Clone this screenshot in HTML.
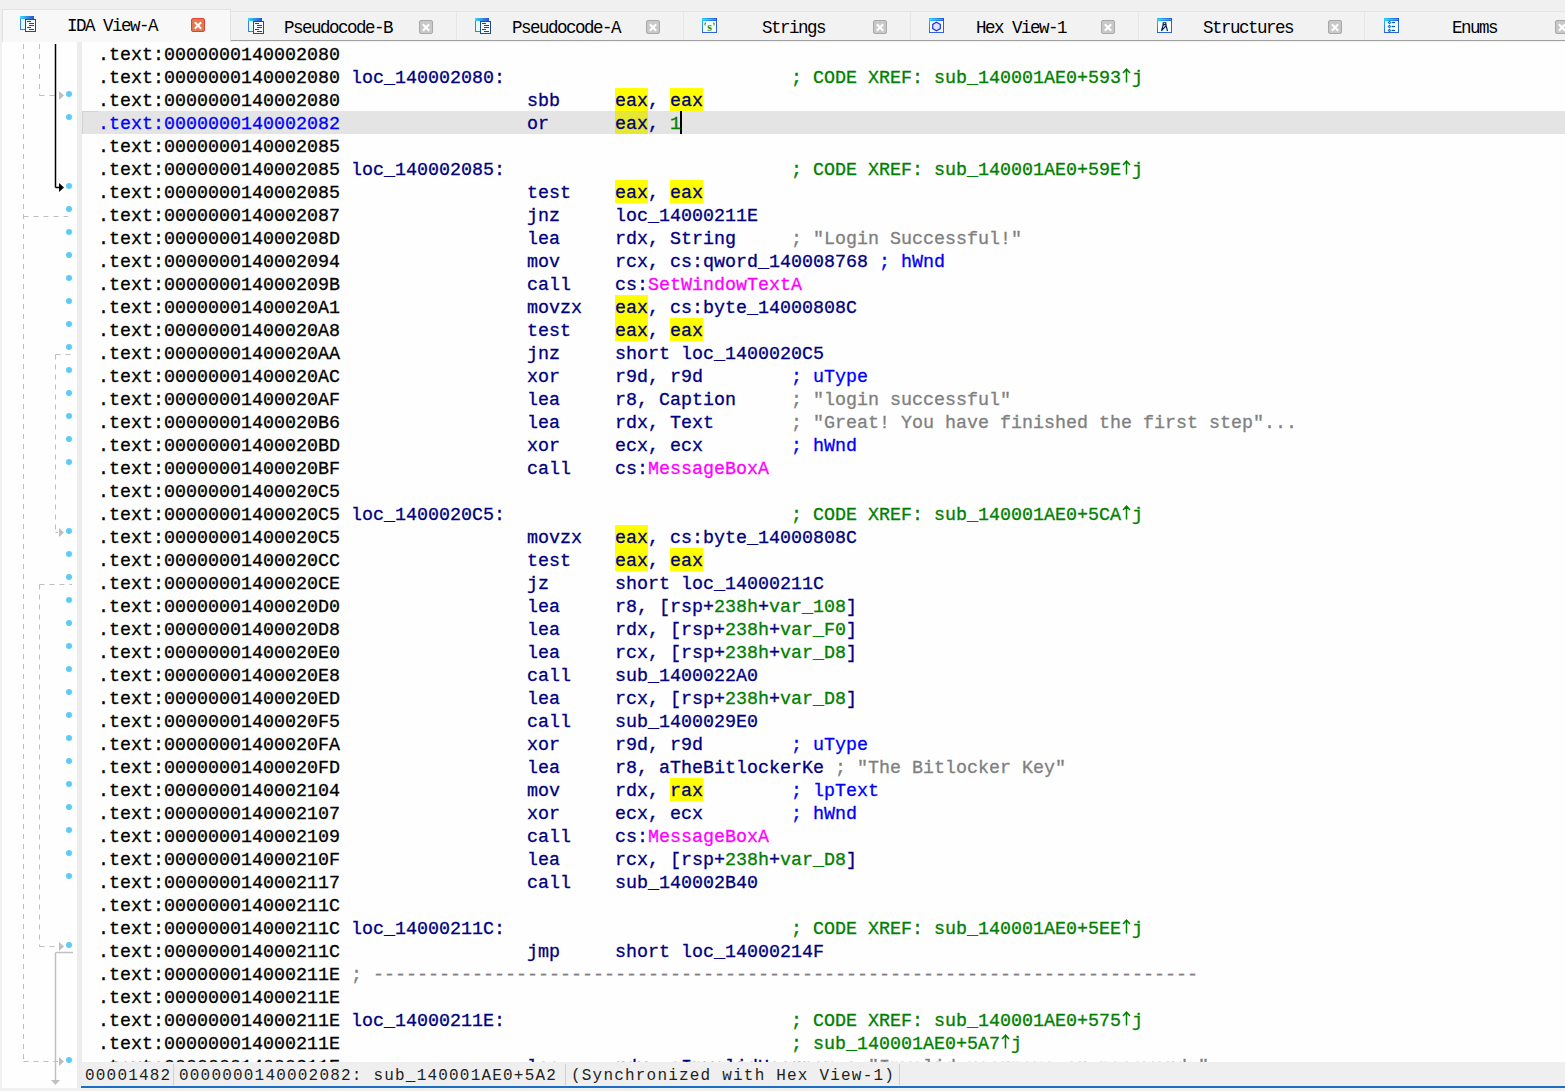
<!DOCTYPE html>
<html><head><meta charset="utf-8">
<style>
html,body{margin:0;padding:0;}
body{width:1565px;height:1091px;overflow:hidden;background:#f0f0f0;position:relative;font-family:"Liberation Mono",monospace;}
.abs{position:absolute;}
#tabbar{left:0;top:0;width:1565px;height:42px;background:#f0f0f0;}
.tab{position:absolute;top:11px;height:29px;width:227px;background:#f2f2f2;border-right:1px solid #e6e6e6;border-top:1px solid #e6e6e6;box-sizing:border-box;}
.tab.active{top:9px;height:33px;background:#f8f8f8;border:1px solid #e2e2e2;border-bottom:none;}
.tabline{position:absolute;left:231px;top:40px;width:1335px;height:1px;background:#a0a0a0;}
.ttxt{position:absolute;top:5px;font-family:"Liberation Mono",monospace;font-size:17.5px;letter-spacing:-1.5px;line-height:20px;color:#000;white-space:pre;}
.cls{position:absolute;width:12px;height:12px;border:1px solid #a8a8a8;border-radius:2px;background:#c8c8c8;}
.cls:before,.cls:after{content:"";position:absolute;left:5px;top:1.5px;width:2px;height:9px;background:#fff;transform:rotate(45deg);}
.cls:after{transform:rotate(-45deg);}
.cls.act{background:#e2784e;border-color:#d8463a;}
.ico{position:absolute;}
#gutter{left:2px;top:42px;width:75px;height:1046px;background:#fefefe;}
#gstrip{left:77px;top:42px;width:5px;height:1046px;background:#ececec;}
#code{left:82px;top:42px;width:1483px;height:1020px;background:#fefefe;overflow:hidden;}
.row{position:absolute;left:0;width:1483px;height:23px;}
.tx{position:absolute;left:16px;top:2px;line-height:23px;white-space:pre;font-size:18.33px;color:#000;-webkit-text-stroke:0.3px currentColor;}
.up{display:inline-block;width:11px;height:1px;position:relative;}
.up svg{position:absolute;left:0;bottom:0;}
.hl{position:absolute;top:0;height:23px;background:#ffff00;}
.hl.hs{background:#e6e634;}
.row.sel{background:#e4e4e4;box-shadow:inset 1px 0 #d2d2d2;}
.row.sel:before{content:"";position:absolute;left:0;top:0;width:16px;height:1px;background:#d2d2d2;}
.k{color:#000;}
.selk{color:#0000ff;}
.n{color:#000080;}
.g{color:#008000;}
.gr{color:#808080;}
.bl{color:#0000ff;}
.m{color:#ff00ff;}
.cur{position:absolute;left:598px;top:0;width:2px;height:23px;background:#000;}
#status{left:82px;top:1062px;width:1483px;height:25px;background:#efefef;}
#sline{left:81px;top:1086px;width:1484px;height:2px;background:#1a6fc4;}
.stxt{position:absolute;top:3px;font-size:16px;letter-spacing:1.2px;line-height:22px;color:#1e1e1e;white-space:pre;}
.ssep{position:absolute;top:2px;width:1px;height:21px;background:#d0d0d0;}
</style></head><body>
<div id="tabbar" class="abs">
  <div class="tab active" style="left:2px;width:229px;">
  </div>
  <div class="tab" style="left:231px;width:226px;"></div>
  <div class="tab" style="left:457px;"></div>
  <div class="tab" style="left:684px;"></div>
  <div class="tab" style="left:911px;width:228px;"></div>
  <div class="tab" style="left:1139px;width:226px;"></div>
  <div class="tab" style="left:1365px;"></div>
  <div class="tabline"></div>
  <div class="ttxt" style="left:67px;top:16px;">IDA View-A</div>
  <div class="ttxt" style="left:284px;top:18px;">Pseudocode-B</div>
  <div class="ttxt" style="left:512px;top:18px;">Pseudocode-A</div>
  <div class="ttxt" style="left:762px;top:18px;">Strings</div>
  <div class="ttxt" style="left:976px;top:18px;">Hex View-1</div>
  <div class="ttxt" style="left:1203px;top:18px;">Structures</div>
  <div class="ttxt" style="left:1452px;top:18px;">Enums</div>
  <div class="cls act" style="left:191px;top:18px;"></div>
  <div class="cls" style="left:419px;top:20px;"></div>
  <div class="cls" style="left:646px;top:20px;"></div>
  <div class="cls" style="left:873px;top:20px;"></div>
  <div class="cls" style="left:1101px;top:20px;"></div>
  <div class="cls" style="left:1328px;top:20px;"></div>
  <div class="cls" style="left:1555px;top:20px;"></div>
  <svg class="ico" style="left:20px;top:16px" width="18" height="18" viewBox="0 0 18 18"><defs><linearGradient id="dg20" x1="0" x2="1"><stop offset="0" stop-color="#3ad6f8"/><stop offset="1" stop-color="#2a4fd0"/></linearGradient></defs><rect x="0.5" y="0.5" width="13" height="13" fill="#e4fdff" stroke="#3a80e0"/><rect x="0" y="0" width="14" height="3" fill="url(#dg20)"/><rect x="5.5" y="3.5" width="10" height="12" fill="#f6faff" stroke="#1d4f86"/><rect x="7" y="5" width="4" height="1" fill="#3c464c"/><rect x="9" y="7" width="5" height="1" fill="#3c464c"/><rect x="9" y="9" width="5" height="1" fill="#3c464c"/><rect x="7" y="11" width="4" height="1" fill="#3c464c"/><rect x="9" y="13" width="5" height="1" fill="#3c464c"/></svg><svg class="ico" style="left:248px;top:18px" width="18" height="18" viewBox="0 0 18 18"><defs><linearGradient id="dg248" x1="0" x2="1"><stop offset="0" stop-color="#3ad6f8"/><stop offset="1" stop-color="#2a4fd0"/></linearGradient></defs><rect x="0.5" y="0.5" width="13" height="13" fill="#e4fdff" stroke="#3a80e0"/><rect x="0" y="0" width="14" height="3" fill="url(#dg248)"/><rect x="5.5" y="3.5" width="10" height="12" fill="#f6faff" stroke="#1d4f86"/><rect x="7" y="5" width="4" height="1" fill="#3c464c"/><rect x="9" y="7" width="5" height="1" fill="#3c464c"/><rect x="9" y="9" width="5" height="1" fill="#3c464c"/><rect x="7" y="11" width="4" height="1" fill="#3c464c"/><rect x="9" y="13" width="5" height="1" fill="#3c464c"/></svg><svg class="ico" style="left:475px;top:18px" width="18" height="18" viewBox="0 0 18 18"><defs><linearGradient id="dg475" x1="0" x2="1"><stop offset="0" stop-color="#3ad6f8"/><stop offset="1" stop-color="#2a4fd0"/></linearGradient></defs><rect x="0.5" y="0.5" width="13" height="13" fill="#e4fdff" stroke="#3a80e0"/><rect x="0" y="0" width="14" height="3" fill="url(#dg475)"/><rect x="5.5" y="3.5" width="10" height="12" fill="#f6faff" stroke="#1d4f86"/><rect x="7" y="5" width="4" height="1" fill="#3c464c"/><rect x="9" y="7" width="5" height="1" fill="#3c464c"/><rect x="9" y="9" width="5" height="1" fill="#3c464c"/><rect x="7" y="11" width="4" height="1" fill="#3c464c"/><rect x="9" y="13" width="5" height="1" fill="#3c464c"/></svg><svg class="ico" style="left:702px;top:18px" width="16" height="16" viewBox="0 0 16 16"><defs><linearGradient id="tg702" x1="0" x2="1"><stop offset="0" stop-color="#22d0f8"/><stop offset="1" stop-color="#2450d8"/></linearGradient><linearGradient id="tv702" x1="0" y1="0" x2="0" y2="1"><stop offset="0" stop-color="#22c8f8"/><stop offset="1" stop-color="#2f62d6"/></linearGradient></defs><rect x="0.5" y="0.5" width="14" height="14" fill="#f2feff" stroke="#2f62d6"/><rect x="0" y="0" width="1" height="15" fill="url(#tv702)"/><rect x="0" y="0" width="15" height="3" fill="url(#tg702)"/><rect x="1" y="1" width="13" height="1" fill="#5ee8ff" opacity="0.5"/><path d="M3.6 4.2C2.4 4.6 2.2 6 2.8 7.4L3.6 7.6L3.4 6.2L4 5.2Z" fill="#2a7a10"/><path d="M11.4 4.2C12.8 4.4 13 6 12.2 7.6L11.4 7.6L11.8 6.2L11.2 5.2Z" fill="#2a7a10"/><text x="7.6" y="13.2" font-family="Liberation Serif" font-weight="bold" font-size="12" fill="#2a8a10" text-anchor="middle">s</text></svg><svg class="ico" style="left:929px;top:18px" width="16" height="16" viewBox="0 0 16 16"><defs><linearGradient id="tg929" x1="0" x2="1"><stop offset="0" stop-color="#22d0f8"/><stop offset="1" stop-color="#2450d8"/></linearGradient><linearGradient id="tv929" x1="0" y1="0" x2="0" y2="1"><stop offset="0" stop-color="#22c8f8"/><stop offset="1" stop-color="#2f62d6"/></linearGradient></defs><rect x="0.5" y="0.5" width="14" height="14" fill="#f2feff" stroke="#2f62d6"/><rect x="0" y="0" width="1" height="15" fill="url(#tv929)"/><rect x="0" y="0" width="15" height="3" fill="url(#tg929)"/><rect x="1" y="1" width="13" height="1" fill="#5ee8ff" opacity="0.5"/><polygon points="7.5,4.2 11.3,6.4 11.3,10.6 7.5,12.8 3.7,10.6 3.7,6.4" fill="#dde8ff" stroke="#2a2aff" stroke-width="1.2"/></svg><svg class="ico" style="left:1157px;top:18px" width="16" height="16" viewBox="0 0 16 16"><defs><linearGradient id="tg1157" x1="0" x2="1"><stop offset="0" stop-color="#22d0f8"/><stop offset="1" stop-color="#2450d8"/></linearGradient><linearGradient id="tv1157" x1="0" y1="0" x2="0" y2="1"><stop offset="0" stop-color="#22c8f8"/><stop offset="1" stop-color="#2f62d6"/></linearGradient></defs><rect x="0.5" y="0.5" width="14" height="14" fill="#f2feff" stroke="#2f62d6"/><rect x="0" y="0" width="1" height="15" fill="url(#tv1157)"/><rect x="0" y="0" width="15" height="3" fill="url(#tg1157)"/><rect x="1" y="1" width="13" height="1" fill="#5ee8ff" opacity="0.5"/><path d="M6.2 4.8h2.6v1.8h-2.6z" fill="none" stroke="#0a1e50" stroke-width="1.1"/><path d="M6.2 6.6L4.5 13M8.8 6.6L10.5 13M5 12L9.2 7.6" stroke="#0a1e50" stroke-width="1.2" fill="none"/></svg><svg class="ico" style="left:1384px;top:18px" width="16" height="16" viewBox="0 0 16 16"><defs><linearGradient id="tg1384" x1="0" x2="1"><stop offset="0" stop-color="#22d0f8"/><stop offset="1" stop-color="#2450d8"/></linearGradient><linearGradient id="tv1384" x1="0" y1="0" x2="0" y2="1"><stop offset="0" stop-color="#22c8f8"/><stop offset="1" stop-color="#2f62d6"/></linearGradient></defs><rect x="0.5" y="0.5" width="14" height="14" fill="#f2feff" stroke="#2f62d6"/><rect x="0" y="0" width="1" height="15" fill="url(#tv1384)"/><rect x="0" y="0" width="15" height="3" fill="url(#tg1384)"/><rect x="1" y="1" width="13" height="1" fill="#5ee8ff" opacity="0.5"/><path d="M5.5 3.1 l-1.4 1.4 1.4 1.4 1.4-1.4z" fill="#00e8ff" stroke="#001e80" stroke-width="0.8"/><rect x="8" y="3.9" width="3" height="1.2" fill="#0050c8"/><path d="M5.5 7.1 l-1.4 1.4 1.4 1.4 1.4-1.4z" fill="#00e8ff" stroke="#001e80" stroke-width="0.8"/><rect x="8" y="7.9" width="3" height="1.2" fill="#0050c8"/><path d="M5.5 11.1 l-1.4 1.4 1.4 1.4 1.4-1.4z" fill="#00e8ff" stroke="#001e80" stroke-width="0.8"/><rect x="8" y="11.9" width="3" height="1.2" fill="#0050c8"/></svg>
</div>
<div id="gutter" class="abs"></div>
<div id="gstrip" class="abs"></div>
<svg class="abs" style="left:0;top:0" width="82" height="1091">
<line x1="23.5" y1="44" x2="23.5" y2="1061.5" stroke="#bebebe" stroke-width="1" stroke-dasharray="5,5"/>
<line x1="23.5" y1="1061.5" x2="58" y2="1061.5" stroke="#bebebe" stroke-width="1" stroke-dasharray="5,5"/>
<polygon points="59,1057.0 64,1061.5 59,1066.0" fill="#bebebe"/>
<line x1="23.5" y1="216.5" x2="68" y2="216.5" stroke="#bebebe" stroke-width="1" stroke-dasharray="5,5"/>
<line x1="39.5" y1="44" x2="39.5" y2="95.5" stroke="#bebebe" stroke-width="1" stroke-dasharray="5,5"/>
<line x1="39.5" y1="95.5" x2="58" y2="95.5" stroke="#bebebe" stroke-width="1" stroke-dasharray="5,5"/>
<polygon points="59,91.0 64,95.5 59,100.0" fill="#bebebe"/>
<line x1="55.5" y1="44" x2="55.5" y2="187.5" stroke="#000" stroke-width="1.5"/>
<line x1="55.5" y1="187.5" x2="59" y2="187.5" stroke="#000" stroke-width="1.5"/>
<polygon points="59,183.0 64,187.5 59,192.0" fill="#000"/>
<line x1="55.5" y1="354.5" x2="72" y2="354.5" stroke="#bebebe" stroke-width="1" stroke-dasharray="5,5"/>
<line x1="55.5" y1="354.5" x2="55.5" y2="532.5" stroke="#bebebe" stroke-width="1" stroke-dasharray="5,5"/>
<line x1="55.5" y1="532.5" x2="58" y2="532.5" stroke="#bebebe" stroke-width="1" stroke-dasharray="5,5"/>
<polygon points="59,528.0 64,532.5 59,537.0" fill="#bebebe"/>
<line x1="39.5" y1="584.5" x2="72" y2="584.5" stroke="#bebebe" stroke-width="1" stroke-dasharray="5,5"/>
<line x1="39.5" y1="584.5" x2="39.5" y2="946.5" stroke="#bebebe" stroke-width="1" stroke-dasharray="5,5"/>
<line x1="39.5" y1="946.5" x2="58" y2="946.5" stroke="#bebebe" stroke-width="1" stroke-dasharray="5,5"/>
<polygon points="59,942.0 64,946.5 59,951.0" fill="#bebebe"/>
<line x1="73" y1="952.5" x2="55.5" y2="952.5" stroke="#c0c0c0" stroke-width="1.5"/>
<line x1="55.5" y1="952.5" x2="55.5" y2="1081" stroke="#c0c0c0" stroke-width="1.5"/>
<polygon points="51,1080 60,1080 55.5,1085" fill="#c0c0c0"/>
<circle cx="69" cy="94" r="3" fill="#5ccbfa"/>
<circle cx="69" cy="117" r="3" fill="#5ccbfa"/>
<circle cx="69" cy="186" r="3" fill="#5ccbfa"/>
<circle cx="69" cy="209" r="3" fill="#5ccbfa"/>
<circle cx="69" cy="232" r="3" fill="#5ccbfa"/>
<circle cx="69" cy="255" r="3" fill="#5ccbfa"/>
<circle cx="69" cy="278" r="3" fill="#5ccbfa"/>
<circle cx="69" cy="301" r="3" fill="#5ccbfa"/>
<circle cx="69" cy="324" r="3" fill="#5ccbfa"/>
<circle cx="69" cy="347" r="3" fill="#5ccbfa"/>
<circle cx="69" cy="370" r="3" fill="#5ccbfa"/>
<circle cx="69" cy="393" r="3" fill="#5ccbfa"/>
<circle cx="69" cy="416" r="3" fill="#5ccbfa"/>
<circle cx="69" cy="439" r="3" fill="#5ccbfa"/>
<circle cx="69" cy="462" r="3" fill="#5ccbfa"/>
<circle cx="69" cy="531" r="3" fill="#5ccbfa"/>
<circle cx="69" cy="554" r="3" fill="#5ccbfa"/>
<circle cx="69" cy="577" r="3" fill="#5ccbfa"/>
<circle cx="69" cy="600" r="3" fill="#5ccbfa"/>
<circle cx="69" cy="623" r="3" fill="#5ccbfa"/>
<circle cx="69" cy="646" r="3" fill="#5ccbfa"/>
<circle cx="69" cy="669" r="3" fill="#5ccbfa"/>
<circle cx="69" cy="692" r="3" fill="#5ccbfa"/>
<circle cx="69" cy="715" r="3" fill="#5ccbfa"/>
<circle cx="69" cy="738" r="3" fill="#5ccbfa"/>
<circle cx="69" cy="761" r="3" fill="#5ccbfa"/>
<circle cx="69" cy="784" r="3" fill="#5ccbfa"/>
<circle cx="69" cy="807" r="3" fill="#5ccbfa"/>
<circle cx="69" cy="830" r="3" fill="#5ccbfa"/>
<circle cx="69" cy="853" r="3" fill="#5ccbfa"/>
<circle cx="69" cy="876" r="3" fill="#5ccbfa"/>
<circle cx="69" cy="945" r="3" fill="#5ccbfa"/>
<circle cx="69" cy="1060" r="3" fill="#5ccbfa"/>
</svg>
<div id="code" class="abs">
<div class="row" style="top:0px"><div class="tx"><span class="k">.text:0000000140002080</span></div></div>
<div class="row" style="top:23px"><div class="tx"><span class="k">.text:0000000140002080</span> <span class="n">loc_140002080:</span>                          <span class="g">; CODE XREF: sub_140001AE0+593<span class="up"><svg width="11" height="15" viewBox="0 0 11 15"><path d="M5.5 1.2V14.5M2 5L5.5 1.2L9 5" stroke="currentColor" stroke-width="1.5" fill="none"/></svg></span>j</span></div></div>
<div class="row" style="top:46px"><div class="hl" style="left:533px;width:33px"></div><div class="hl" style="left:588px;width:33px"></div><div class="tx"><span class="k">.text:0000000140002080</span>                 <span class="n">sbb</span>     <span class="n">eax</span><span class="n">, </span><span class="n">eax</span></div></div>
<div class="row sel" style="top:69px"><div class="hl hs" style="left:533px;width:33px"></div><div class="cur"></div><div class="tx"><span class="selk">.text:0000000140002082</span>                 <span class="n">or</span>      <span class="n">eax</span><span class="n">, </span><span class="g">1</span></div></div>
<div class="row" style="top:92px"><div class="tx"><span class="k">.text:0000000140002085</span></div></div>
<div class="row" style="top:115px"><div class="tx"><span class="k">.text:0000000140002085</span> <span class="n">loc_140002085:</span>                          <span class="g">; CODE XREF: sub_140001AE0+59E<span class="up"><svg width="11" height="15" viewBox="0 0 11 15"><path d="M5.5 1.2V14.5M2 5L5.5 1.2L9 5" stroke="currentColor" stroke-width="1.5" fill="none"/></svg></span>j</span></div></div>
<div class="row" style="top:138px"><div class="hl" style="left:533px;width:33px"></div><div class="hl" style="left:588px;width:33px"></div><div class="tx"><span class="k">.text:0000000140002085</span>                 <span class="n">test</span>    <span class="n">eax</span><span class="n">, </span><span class="n">eax</span></div></div>
<div class="row" style="top:161px"><div class="tx"><span class="k">.text:0000000140002087</span>                 <span class="n">jnz</span>     <span class="n">loc_14000211E</span></div></div>
<div class="row" style="top:184px"><div class="tx"><span class="k">.text:000000014000208D</span>                 <span class="n">lea</span>     <span class="n">rdx, String</span>     <span class="gr">; &quot;Login Successful!&quot;</span></div></div>
<div class="row" style="top:207px"><div class="tx"><span class="k">.text:0000000140002094</span>                 <span class="n">mov</span>     <span class="n">rcx, cs:qword_140008768</span> <span class="bl">; hWnd</span></div></div>
<div class="row" style="top:230px"><div class="tx"><span class="k">.text:000000014000209B</span>                 <span class="n">call</span>    <span class="n">cs:</span><span class="m">SetWindowTextA</span></div></div>
<div class="row" style="top:253px"><div class="hl" style="left:533px;width:33px"></div><div class="tx"><span class="k">.text:00000001400020A1</span>                 <span class="n">movzx</span>   <span class="n">eax</span><span class="n">, cs:byte_14000808C</span></div></div>
<div class="row" style="top:276px"><div class="hl" style="left:533px;width:33px"></div><div class="hl" style="left:588px;width:33px"></div><div class="tx"><span class="k">.text:00000001400020A8</span>                 <span class="n">test</span>    <span class="n">eax</span><span class="n">, </span><span class="n">eax</span></div></div>
<div class="row" style="top:299px"><div class="tx"><span class="k">.text:00000001400020AA</span>                 <span class="n">jnz</span>     <span class="n">short loc_1400020C5</span></div></div>
<div class="row" style="top:322px"><div class="tx"><span class="k">.text:00000001400020AC</span>                 <span class="n">xor</span>     <span class="n">r9d, r9d</span>        <span class="bl">; uType</span></div></div>
<div class="row" style="top:345px"><div class="tx"><span class="k">.text:00000001400020AF</span>                 <span class="n">lea</span>     <span class="n">r8, Caption</span>     <span class="gr">; &quot;login successful&quot;</span></div></div>
<div class="row" style="top:368px"><div class="tx"><span class="k">.text:00000001400020B6</span>                 <span class="n">lea</span>     <span class="n">rdx, Text</span>       <span class="gr">; &quot;Great! You have finished the first step&quot;...</span></div></div>
<div class="row" style="top:391px"><div class="tx"><span class="k">.text:00000001400020BD</span>                 <span class="n">xor</span>     <span class="n">ecx, ecx</span>        <span class="bl">; hWnd</span></div></div>
<div class="row" style="top:414px"><div class="tx"><span class="k">.text:00000001400020BF</span>                 <span class="n">call</span>    <span class="n">cs:</span><span class="m">MessageBoxA</span></div></div>
<div class="row" style="top:437px"><div class="tx"><span class="k">.text:00000001400020C5</span></div></div>
<div class="row" style="top:460px"><div class="tx"><span class="k">.text:00000001400020C5</span> <span class="n">loc_1400020C5:</span>                          <span class="g">; CODE XREF: sub_140001AE0+5CA<span class="up"><svg width="11" height="15" viewBox="0 0 11 15"><path d="M5.5 1.2V14.5M2 5L5.5 1.2L9 5" stroke="currentColor" stroke-width="1.5" fill="none"/></svg></span>j</span></div></div>
<div class="row" style="top:483px"><div class="hl" style="left:533px;width:33px"></div><div class="tx"><span class="k">.text:00000001400020C5</span>                 <span class="n">movzx</span>   <span class="n">eax</span><span class="n">, cs:byte_14000808C</span></div></div>
<div class="row" style="top:506px"><div class="hl" style="left:533px;width:33px"></div><div class="hl" style="left:588px;width:33px"></div><div class="tx"><span class="k">.text:00000001400020CC</span>                 <span class="n">test</span>    <span class="n">eax</span><span class="n">, </span><span class="n">eax</span></div></div>
<div class="row" style="top:529px"><div class="tx"><span class="k">.text:00000001400020CE</span>                 <span class="n">jz</span>      <span class="n">short loc_14000211C</span></div></div>
<div class="row" style="top:552px"><div class="tx"><span class="k">.text:00000001400020D0</span>                 <span class="n">lea</span>     <span class="n">r8, [rsp+</span><span class="g">238h</span><span class="n">+</span><span class="g">var_108</span><span class="n">]</span></div></div>
<div class="row" style="top:575px"><div class="tx"><span class="k">.text:00000001400020D8</span>                 <span class="n">lea</span>     <span class="n">rdx, [rsp+</span><span class="g">238h</span><span class="n">+</span><span class="g">var_F0</span><span class="n">]</span></div></div>
<div class="row" style="top:598px"><div class="tx"><span class="k">.text:00000001400020E0</span>                 <span class="n">lea</span>     <span class="n">rcx, [rsp+</span><span class="g">238h</span><span class="n">+</span><span class="g">var_D8</span><span class="n">]</span></div></div>
<div class="row" style="top:621px"><div class="tx"><span class="k">.text:00000001400020E8</span>                 <span class="n">call</span>    <span class="n">sub_1400022A0</span></div></div>
<div class="row" style="top:644px"><div class="tx"><span class="k">.text:00000001400020ED</span>                 <span class="n">lea</span>     <span class="n">rcx, [rsp+</span><span class="g">238h</span><span class="n">+</span><span class="g">var_D8</span><span class="n">]</span></div></div>
<div class="row" style="top:667px"><div class="tx"><span class="k">.text:00000001400020F5</span>                 <span class="n">call</span>    <span class="n">sub_1400029E0</span></div></div>
<div class="row" style="top:690px"><div class="tx"><span class="k">.text:00000001400020FA</span>                 <span class="n">xor</span>     <span class="n">r9d, r9d</span>        <span class="bl">; uType</span></div></div>
<div class="row" style="top:713px"><div class="tx"><span class="k">.text:00000001400020FD</span>                 <span class="n">lea</span>     <span class="n">r8, aTheBitlockerKe</span> <span class="gr">; &quot;The Bitlocker Key&quot;</span></div></div>
<div class="row" style="top:736px"><div class="hl" style="left:588px;width:33px"></div><div class="tx"><span class="k">.text:0000000140002104</span>                 <span class="n">mov</span>     <span class="n">rdx, </span><span class="n">rax</span>        <span class="bl">; lpText</span></div></div>
<div class="row" style="top:759px"><div class="tx"><span class="k">.text:0000000140002107</span>                 <span class="n">xor</span>     <span class="n">ecx, ecx</span>        <span class="bl">; hWnd</span></div></div>
<div class="row" style="top:782px"><div class="tx"><span class="k">.text:0000000140002109</span>                 <span class="n">call</span>    <span class="n">cs:</span><span class="m">MessageBoxA</span></div></div>
<div class="row" style="top:805px"><div class="tx"><span class="k">.text:000000014000210F</span>                 <span class="n">lea</span>     <span class="n">rcx, [rsp+</span><span class="g">238h</span><span class="n">+</span><span class="g">var_D8</span><span class="n">]</span></div></div>
<div class="row" style="top:828px"><div class="tx"><span class="k">.text:0000000140002117</span>                 <span class="n">call</span>    <span class="n">sub_140002B40</span></div></div>
<div class="row" style="top:851px"><div class="tx"><span class="k">.text:000000014000211C</span></div></div>
<div class="row" style="top:874px"><div class="tx"><span class="k">.text:000000014000211C</span> <span class="n">loc_14000211C:</span>                          <span class="g">; CODE XREF: sub_140001AE0+5EE<span class="up"><svg width="11" height="15" viewBox="0 0 11 15"><path d="M5.5 1.2V14.5M2 5L5.5 1.2L9 5" stroke="currentColor" stroke-width="1.5" fill="none"/></svg></span>j</span></div></div>
<div class="row" style="top:897px"><div class="tx"><span class="k">.text:000000014000211C</span>                 <span class="n">jmp</span>     <span class="n">short loc_14000214F</span></div></div>
<div class="row" style="top:920px"><div class="tx"><span class="k">.text:000000014000211E</span> <span class="gr">; ---------------------------------------------------------------------------</span></div></div>
<div class="row" style="top:943px"><div class="tx"><span class="k">.text:000000014000211E</span></div></div>
<div class="row" style="top:966px"><div class="tx"><span class="k">.text:000000014000211E</span> <span class="n">loc_14000211E:</span>                          <span class="g">; CODE XREF: sub_140001AE0+575<span class="up"><svg width="11" height="15" viewBox="0 0 11 15"><path d="M5.5 1.2V14.5M2 5L5.5 1.2L9 5" stroke="currentColor" stroke-width="1.5" fill="none"/></svg></span>j</span></div></div>
<div class="row" style="top:989px"><div class="tx"><span class="k">.text:000000014000211E</span>                                         <span class="g">; sub_140001AE0+5A7<span class="up"><svg width="11" height="15" viewBox="0 0 11 15"><path d="M5.5 1.2V14.5M2 5L5.5 1.2L9 5" stroke="currentColor" stroke-width="1.5" fill="none"/></svg></span>j</span></div></div>
<div class="row" style="top:1012px"><div class="tx"><span class="k">.text:000000014000211E</span>                 <span class="n">lea</span>     <span class="n">rdx, aInvalidUsernam</span> <span class="gr">; &quot;Invalid username or password.&quot;</span></div></div>
</div>
<div id="status" class="abs">
  <div class="stxt" style="left:3px;">00001482</div>
  <div class="ssep" style="left:91px;"></div>
  <div class="stxt" style="left:97px;">0000000140002082: sub_140001AE0+5A2</div>
  <div class="ssep" style="left:483px;"></div>
  <div class="stxt" style="left:489px;">(Synchronized with Hex View-1)</div>
  <div class="ssep" style="left:817px;"></div>
</div>
<div id="sline" class="abs"></div>
</body></html>
